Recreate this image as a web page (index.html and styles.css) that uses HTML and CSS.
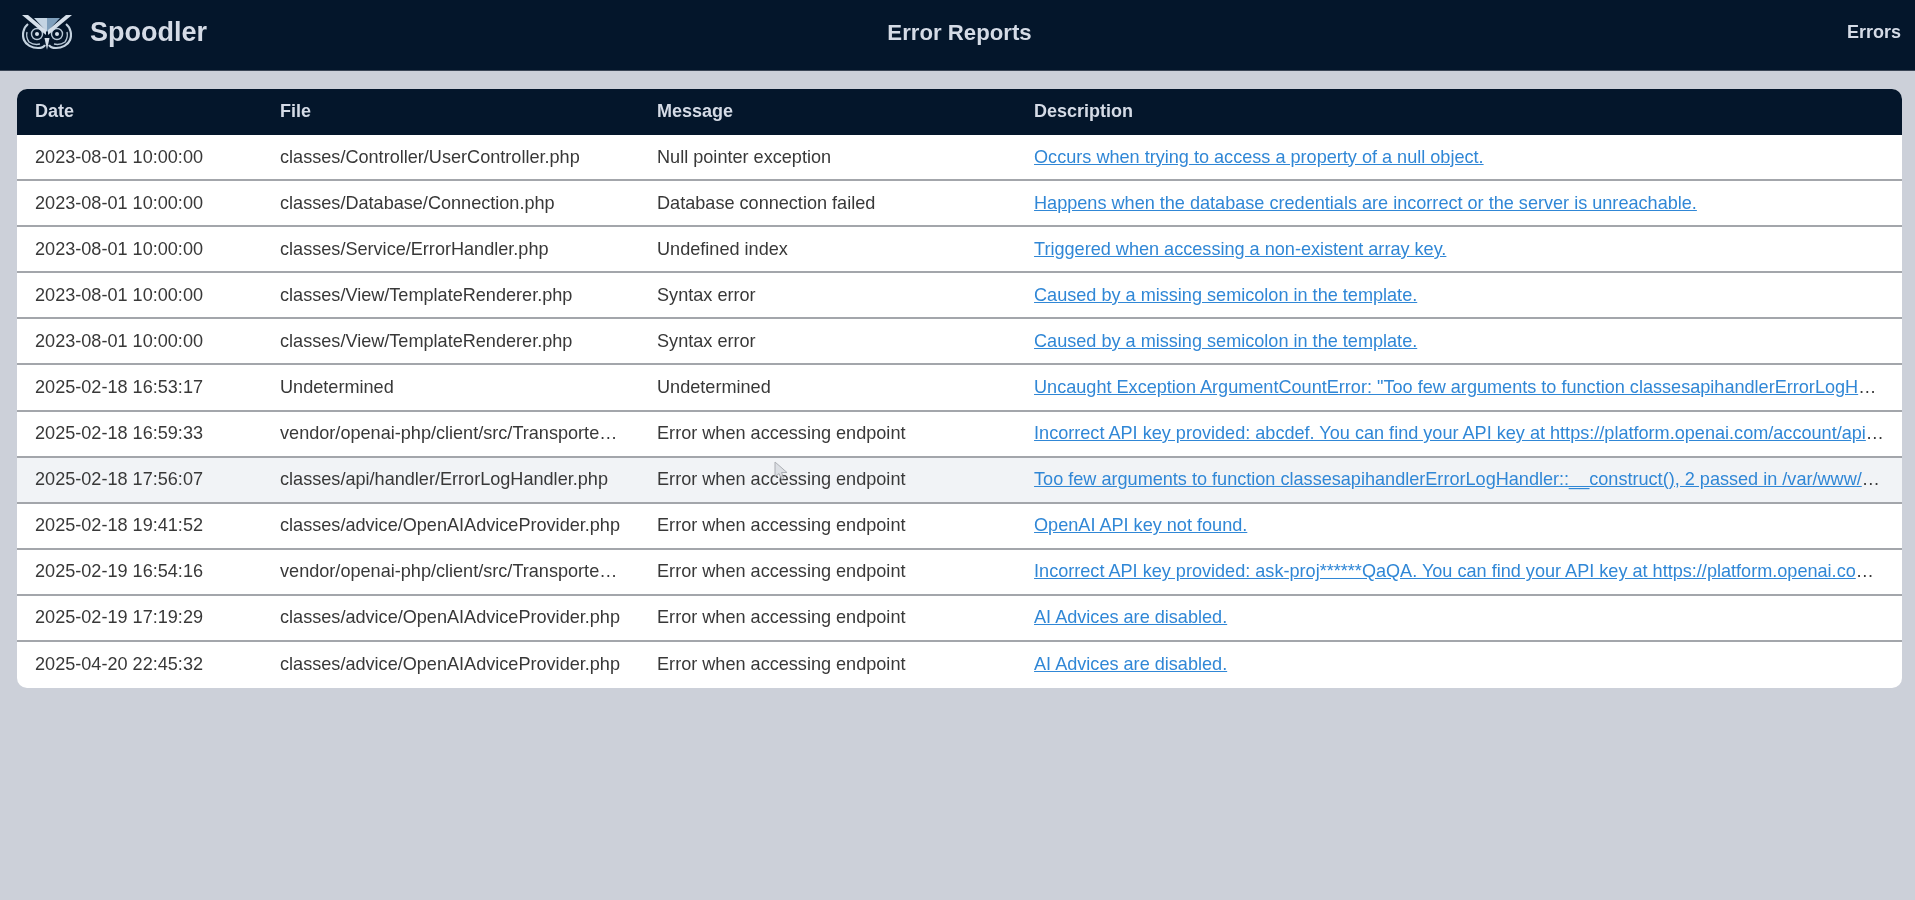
FILE: index.html
```html
<!DOCTYPE html>
<html lang="en">
<head>
<meta charset="utf-8">
<title>Error Reports</title>
<link rel="stylesheet" href="styles.css">
</head>
<body>
<div class="page">
<header class="topbar">
  <a class="brand" href="#">
    <svg class="owl" viewBox="0 0 50 36" aria-hidden="true">
      <path class="owl-pale" d="M12 3h13v14z"/>
      <path class="owl-mid" d="M25 3h13L25 17z"/>
      <path class="owl-line" d="M6 9C1 13 0 20 2 25c2 5 8 8 14 8 3 0 6-1 7-3"/>
      <path class="owl-line" d="M44 9c5 4 6 11 4 16-2 5-8 8-14 8-3 0-6-1-7-3"/>
      <path class="owl-thin" d="M5 17c-1 4 0 7 2 10 3 2 7 3 11 2M45 17c1 4 0 7-2 10-3 2-7 3-11 2"/>
      <circle class="owl-thin" cx="15" cy="19" r="5.5"/>
      <circle class="owl-thin" cx="35" cy="19" r="5.5"/>
      <circle class="owl-dot" cx="15" cy="19" r="2"/>
      <circle class="owl-dot" cx="35" cy="19" r="2"/>
      <path class="owl-light" d="M0 0h6l18 15v5z"/>
      <path class="owl-light" d="M50 0h-6L26 15v5z"/>
      <path class="owl-light" d="M22.5 23h5L25 35z"/>
    </svg>
    <span class="brand-name">Spoodler</span>
  </a>
  <h1 class="page-title">Error Reports</h1>
  <nav class="nav"><a class="nav-link" href="#">Errors</a></nav>
</header>
<main class="content">
  <table class="reports">
    <colgroup>
      <col class="col-date"><col class="col-file"><col class="col-message"><col class="col-description">
    </colgroup>
    <thead>
      <tr><th>Date</th><th>File</th><th>Message</th><th>Description</th></tr>
    </thead>
    <tbody>
      <tr><td>2023-08-01 10:00:00</td><td>classes/Controller/UserController.php</td><td>Null pointer exception</td><td><a href="#">Occurs when trying to access a property of a null object.</a></td></tr>
      <tr><td>2023-08-01 10:00:00</td><td>classes/Database/Connection.php</td><td>Database connection failed</td><td><a href="#">Happens when the database credentials are incorrect or the server is unreachable.</a></td></tr>
      <tr><td>2023-08-01 10:00:00</td><td>classes/Service/ErrorHandler.php</td><td>Undefined index</td><td><a href="#">Triggered when accessing a non-existent array key.</a></td></tr>
      <tr><td>2023-08-01 10:00:00</td><td>classes/View/TemplateRenderer.php</td><td>Syntax error</td><td><a href="#">Caused by a missing semicolon in the template.</a></td></tr>
      <tr><td>2023-08-01 10:00:00</td><td>classes/View/TemplateRenderer.php</td><td>Syntax error</td><td><a href="#">Caused by a missing semicolon in the template.</a></td></tr>
      <tr><td>2025-02-18 16:53:17</td><td>Undetermined</td><td>Undetermined</td><td><a href="#">Uncaught Exception ArgumentCountError: "Too few arguments to function classesapihandlerErrorLogHandler::__construct(), 2 passed in /var/www/html</a></td></tr>
      <tr><td>2025-02-18 16:59:33</td><td>vendor/openai-php/client/src/Transporters/HttpTransporter.php</td><td>Error when accessing endpoint</td><td><a href="#">Incorrect API key provided: abcdef. You can find your API key at https://platform.openai.com/account/api-keys.</a></td></tr>
      <tr class="is-hovered"><td>2025-02-18 17:56:07</td><td>classes/api/handler/ErrorLogHandler.php</td><td>Error when accessing endpoint</td><td><a href="#">Too few arguments to function classesapihandlerErrorLogHandler::__construct(), 2 passed in /var/www/html/index.php on line 12</a></td></tr>
      <tr><td>2025-02-18 19:41:52</td><td>classes/advice/OpenAIAdviceProvider.php</td><td>Error when accessing endpoint</td><td><a href="#">OpenAI API key not found.</a></td></tr>
      <tr><td>2025-02-19 16:54:16</td><td>vendor/openai-php/client/src/Transporters/HttpTransporter.php</td><td>Error when accessing endpoint</td><td><a href="#">Incorrect API key provided: ask-proj******QaQA. You can find your API key at https://platform.openai.com/account/api-keys.</a></td></tr>
      <tr><td>2025-02-19 17:19:29</td><td>classes/advice/OpenAIAdviceProvider.php</td><td>Error when accessing endpoint</td><td><a href="#">AI Advices are disabled.</a></td></tr>
      <tr><td>2025-04-20 22:45:32</td><td>classes/advice/OpenAIAdviceProvider.php</td><td>Error when accessing endpoint</td><td><a href="#">AI Advices are disabled.</a></td></tr>
    </tbody>
  </table>
</main>
<svg class="cursor" viewBox="0 0 14 20" aria-hidden="true"><path d="M1 1v15l4-3.5 2.5 6 2.5-1-2.5-6H13z"/></svg>
</div>
</body>
</html>
```

FILE: styles.css
```css
* { box-sizing: border-box; }

html, body { height: 100%; }

body {
  margin: 0;
  background: #ccd0d9;
  color: #383838;
  font-family: "Liberation Sans", Arial, sans-serif;
  font-size: 18.1px;
  overflow: hidden;
}

.page {
  position: relative;
  height: 100%;
  filter: blur(0.35px);
}

.topbar {
  display: grid;
  grid-template-columns: 1fr auto 1fr;
  align-items: center;
  height: 71px;
  padding: 0 14px 5px 18px;
  background: #04162b;
  color: #d5dbe6;
  border-bottom: 1px solid #3b4656;
}

.brand {
  display: flex;
  align-items: center;
  gap: 18px;
  margin-left: 4px;
  color: inherit;
  text-decoration: none;
}

.owl { width: 50px; height: 36px; flex: none; }
.owl-light { fill: #d5dfea; }
.owl-mid { fill: #7f9fbc; }
.owl-pale { fill: #c4d4e3; }
.owl-line { fill: none; stroke: #c4d2df; stroke-width: 2.2; }
.owl-thin { fill: none; stroke: #b6c6d5; stroke-width: 1.4; }
.owl-dot { fill: #d5dfea; }

.brand-name { font-size: 27px; font-weight: 700; }

.page-title {
  margin: 0;
  font-size: 22.2px;
  font-weight: 700;
}

.nav { justify-self: end; }

.nav-link {
  color: inherit;
  font-size: 18px;
  font-weight: 700;
  text-decoration: none;
}

.content { padding: 18px 13px 0 17px; }

.reports {
  width: 100%;
  table-layout: fixed;
  border-collapse: separate;
  border-spacing: 0;
  background: #fff;
  border-radius: 10px;
  overflow: hidden;
}

.col-date { width: 13%; }
.col-file, .col-message { width: 20%; }
.col-description { width: 47%; }

.reports th,
.reports td {
  padding: 0 18px;
  text-align: left;
  white-space: nowrap;
  overflow: hidden;
  text-overflow: ellipsis;
}

.reports th {
  height: 46px;
  padding-bottom: 2px;
  background: #04162b;
  color: #d5dbe6;
  font-size: 18px;
  font-weight: 700;
}

.reports td {
  height: 46.1px;
  border-bottom: 2px solid #a3a6ab;
}

.reports tbody tr:last-child td { border-bottom-color: transparent; }

.reports a { color: #3087d6; }

.is-hovered td { background: #f1f3f6; }

.cursor {
  position: absolute;
  left: 774px;
  top: 461px;
  width: 14px;
  height: 20px;
  fill: #d8dbe0;
  stroke: #9a9da3;
  stroke-width: 1;
  opacity: 0.8;
}
```
